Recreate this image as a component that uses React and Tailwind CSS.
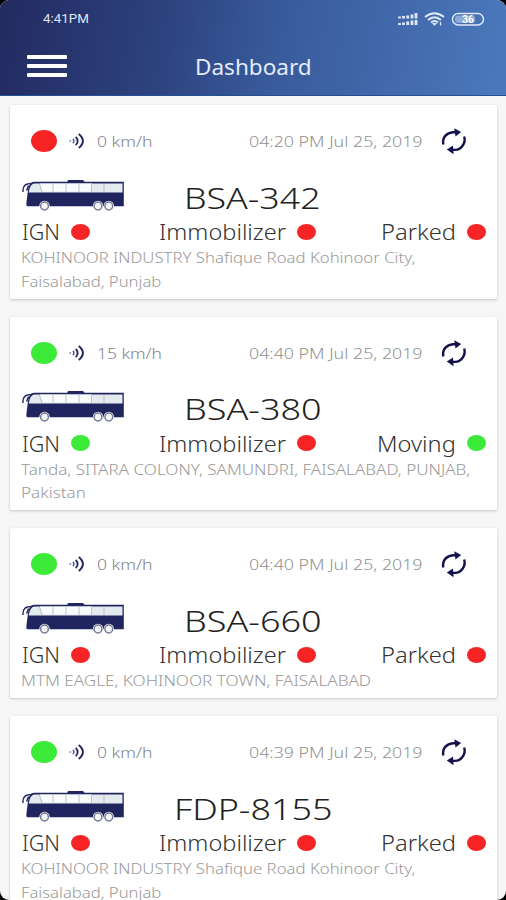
import React, { useLayoutEffect, useRef } from "react";

const vehicles = [
  {
    plate: "BSA-342",
    plateWidth: 137,
    online: false,
    speed: "0 km/h",
    speedWidth: 55,
    time: "04:20 PM Jul 25, 2019",
    ignition: false,
    state: "Parked",
    address: [
      { text: "KOHINOOR INDUSTRY Shafique Road Kohinoor City,", width: 394 },
      { text: "Faisalabad, Punjab", width: 140 },
    ],
  },
  {
    plate: "BSA-380",
    plateWidth: 138,
    online: true,
    speed: "15 km/h",
    speedWidth: 65,
    time: "04:40 PM Jul 25, 2019",
    ignition: true,
    state: "Moving",
    address: [
      { text: "Tanda, SITARA COLONY, SAMUNDRI, FAISALABAD, PUNJAB,", width: 449 },
      { text: "Pakistan", width: 65 },
    ],
  },
  {
    plate: "BSA-660",
    plateWidth: 138,
    online: true,
    speed: "0 km/h",
    speedWidth: 55,
    time: "04:40 PM Jul 25, 2019",
    ignition: false,
    state: "Parked",
    address: [{ text: "MTM EAGLE, KOHINOOR TOWN, FAISALABAD", width: 350 }],
  },
  {
    plate: "FDP-8155",
    plateWidth: 158,
    online: true,
    speed: "0 km/h",
    speedWidth: 55,
    time: "04:39 PM Jul 25, 2019",
    ignition: false,
    state: "Parked",
    address: [
      { text: "KOHINOOR INDUSTRY Shafique Road Kohinoor City,", width: 394 },
      { text: "Faisalabad, Punjab", width: 140 },
    ],
  },
];

// wide lettering: stretches the text horizontally to the given width
function WideText({ width, className = "", children }) {
  const ref = useRef(null);

  useLayoutEffect(() => {
    const el = ref.current;
    const fit = () => {
      el.style.transform = `scaleX(${width / el.offsetWidth})`;
    };
    fit();
    document.fonts?.ready.then(fit);
  }, [width, children]);

  return (
    <span className={`block shrink-0 whitespace-nowrap ${className}`} style={{ width }}>
      <span ref={ref} className="inline-block origin-left">{children}</span>
    </span>
  );
}

function Dot({ on, large }) {
  return (
    <span
      className={`block shrink-0 rounded-[50%] ${large ? "w-[26px] h-[22px]" : "w-[19px] h-[16px]"} ${
        on ? "bg-[#3ceb37]" : "bg-[#f62424]"
      }`}
    />
  );
}

function SignalIcon() {
  return (
    <svg className="shrink-0" width="16" height="16" viewBox="0 0 16 16" fill="none" stroke="#23265f">
      <circle cx="1.3" cy="8" r="0.9" fill="#8a8cae" stroke="none" />
      <path d="M4 5.8Q5.8 8 4 10.2" strokeWidth="1.5" stroke="#5c5f8d" />
      <path d="M6.7 3.8Q10.6 8 6.7 12.2" strokeWidth="1.8" />
      <path d="M9.8 1Q18 8 9.8 15" strokeWidth="2" />
    </svg>
  );
}

function SyncIcon() {
  return (
    <svg className="shrink-0" width="26" height="28" viewBox="0 0 26 28" fill="none" stroke="#15124b" strokeWidth="2.4">
      <path d="M2.300 17.500C1 10.500 5.500 5.600 12 5.200H16" />
      <path d="M23.200 9.500C25.200 16.500 20 22.600 14 22.900H9.500" />
      <path d="M13.200 1.200L20.200 5L14.500 9.600Z" fill="#15124b" stroke="none" />
      <path d="M12 18.600L5.800 22.500L12.600 27.200Z" fill="#15124b" stroke="none" />
    </svg>
  );
}

function Wheel({ cx }) {
  return (
    <g>
      <circle cx={cx} cy="27" r="5.2" fill="#fff" />
      <circle cx={cx} cy="27" r="3.9" fill="#f4f5f7" stroke="#777a93" strokeWidth="1.5" />
    </g>
  );
}

function BusIcon() {
  return (
    <svg className="shrink-0" width="104" height="33" viewBox="0 0 104 33">
      <path d="M45 3.5L46 1H61L63 3.5Z" fill="#20245f" />
      <path d="M12 2.800H101.800V27.300H6C4 27.300 4.300 25 4.500 23L6 11C7 6 8.500 3.200 12 2.800Z" fill="#20245f" />
      <path d="M12.500 4.500H100.500V13.400H6.800C7.500 8 9.500 5 12.500 4.500Z" fill="#e3ebee" />
      <path d="M18 4.500H70V12.500H20Z" fill="#fafcfc" />
      <path d="M17.500 5L20 13M31 5V13M44 5V13M57 5V13M69.500 5V13M82 5V13" stroke="#aab4c2" strokeWidth="0.8" />
      <path d="M10 4.500C4 4.500 0.500 6 1 13" fill="none" stroke="#20245f" strokeWidth="1.400" />
      <path d="M6.500 6.500L4.700 11.500" fill="none" stroke="#20245f" strokeWidth="1.500" />
      <Wheel cx={22.5} />
      <Wheel cx={76} />
      <Wheel cx={86.800} />
    </svg>
  );
}

function VehicleCard({ vehicle }) {
  return (
    <div className="shrink-0 rounded-[2px] bg-white pt-[21px] pb-[5.500px] shadow-[0_1px_3px_rgba(0,0,0,0.2)]">
      <div className="flex h-[30px] items-center pl-[21px]">
        <Dot on={vehicle.online} large />
        <div className="ml-3">
          <SignalIcon />
        </div>
        <WideText width={vehicle.speedWidth} className="ml-[12px] text-[15px] leading-[24px] text-[#80828e]">
          {vehicle.speed}
        </WideText>
        <WideText width={173} className="ml-auto text-[15px] leading-[24px] text-[#919191]">
          {vehicle.time}
        </WideText>
        <div className="ml-[19px] mr-[30px]">
          <SyncIcon />
        </div>
      </div>

      <div className="mt-[21px] flex h-[42px] items-start pt-[1.500px] pl-3">
        <BusIcon />
        <div className="flex flex-1 justify-center pr-[118px]">
          <WideText width={vehicle.plateWidth} className="text-[30px] leading-[37px] text-[#222]">
            {vehicle.plate}
          </WideText>
        </div>
      </div>

      <div className="flex h-[26px] items-center pr-[11px] pl-3 text-[21.500px] leading-[26px] text-[#333]">
        <WideText width={38}>IGN</WideText>
        <div className="ml-[11px] pb-[1px]"><Dot on={vehicle.ignition} /></div>
        <WideText width={127} className="ml-[69px]">Immobilizer</WideText>
        <div className="ml-[11px] pb-[1px]"><Dot on={false} /></div>
        <WideText width={vehicle.state === "Moving" ? 79 : 75} className="ml-auto">{vehicle.state}</WideText>
        <div className="ml-[11px] pb-[1px]"><Dot on={vehicle.state === "Moving"} /></div>
      </div>

      <div className="pt-px pl-[11px] text-[15px] leading-[23.500px] text-[#999]">
        {vehicle.address.map((line) => (
          <WideText key={line.text} width={line.width}>{line.text}</WideText>
        ))}
      </div>
    </div>
  );
}

function StatusIcons() {
  return (
    <svg width="88" height="16" viewBox="0 0 88 16" fill="none" stroke="#dfe8f8">
      <g strokeWidth="2.800">
        <path d="M1.500 5.500V7.500M5.500 5V7.500M9.700 4.500V7.500M14 3.500V7.500M18 2V7.500" />
        <path d="M1.500 12V14M5.500 11.500V14M9.700 10.500V14M14 9.500V14M18 9V14" />
      </g>
      <g strokeWidth="1.800">
        <path d="M27 6Q36.500 -1.500 46 6" />
        <path d="M30 9Q36.500 3.500 43 9" />
        <path d="M33 11.500Q36.500 8.500 40 11.500" />
      </g>
      <path d="M34 12L36.500 15L39 12Z" fill="#dfe8f8" stroke="none" />
      <path d="M42.500 11V14.500" strokeWidth="1.300" />
      <rect x="54.500" y="2.500" width="31" height="11.500" rx="5.700" strokeWidth="1.500" />
      <rect x="57" y="4.500" width="20" height="7.500" rx="3" fill="#8fa9d6" stroke="none" />
      <text x="70" y="12" textAnchor="middle" fontSize="10" fontWeight="700" fontFamily="Roboto, sans-serif" fill="#fff" stroke="none">36</text>
    </svg>
  );
}

export default function App() {
  return (
    <div className="h-[900px] w-[506px] overflow-hidden bg-black">
      <div className="flex h-full flex-col overflow-hidden rounded-[9px] bg-[#f6f6f6] font-['Noto_Sans',sans-serif] font-light">
        <header className="h-24 shrink-0 border-b border-[#244f92] bg-[linear-gradient(100deg,#232a60_0%,#2d427f_32%,#395b9b_55%,#4b78bd_100%)]">
          <div className="flex h-[38px] items-center justify-between pr-[20px] pl-[43px]">
            <WideText width={46} className="font-[Roboto,sans-serif] text-[12.500px] font-normal leading-[16px] text-[#dde5f6]">
              4:41PM
            </WideText>
            <StatusIcons />
          </div>
          <div className="flex h-[56px] items-center pl-[27px]">
            <div className="flex w-10 flex-col gap-[5px]">
              <span className="h-1 rounded-[1px] bg-white" />
              <span className="h-1 rounded-[1px] bg-white" />
              <span className="h-1 rounded-[1px] bg-white" />
            </div>
            <WideText width={117} className="ml-[128px] pt-px text-[21px] font-normal leading-[30px] text-[#e4ecfa]">
              Dashboard
            </WideText>
          </div>
        </header>

        <main className="flex min-h-0 flex-1 flex-col gap-[18px] overflow-hidden pt-[9px] pr-[9px] pl-[10px]">
          {vehicles.map((vehicle) => (
            <VehicleCard key={vehicle.plate} vehicle={vehicle} />
          ))}
        </main>
      </div>
    </div>
  );
}
